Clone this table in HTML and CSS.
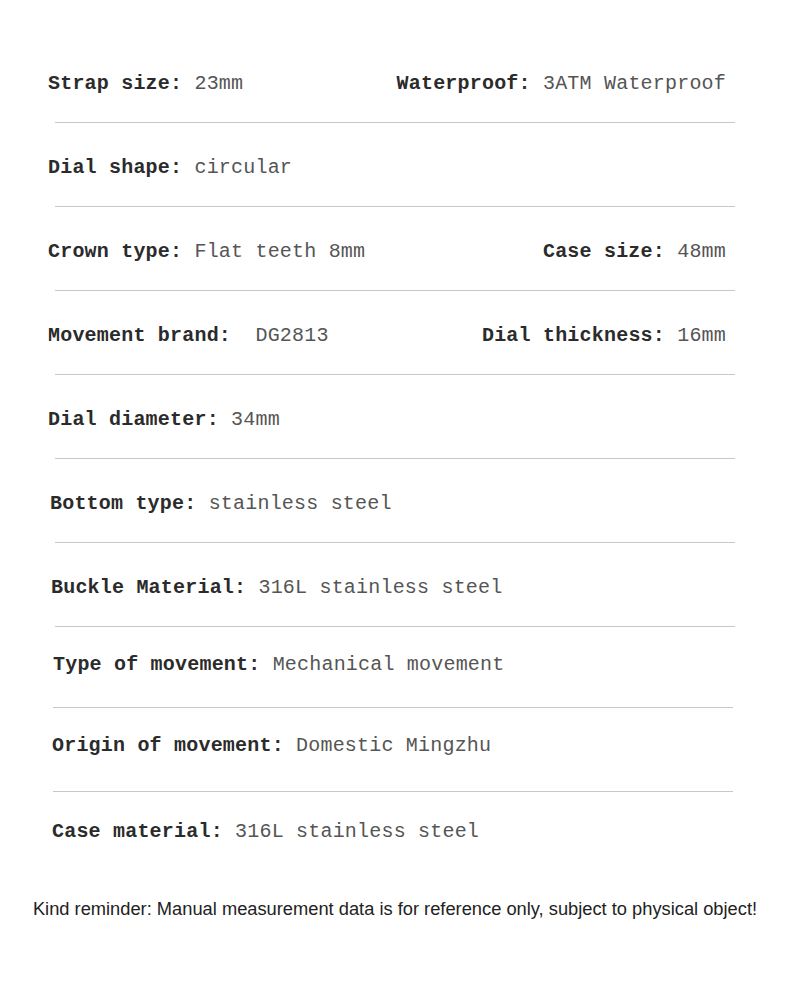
FILE: index.html
```html
<!DOCTYPE html>
<html>
<head>
<meta charset="utf-8">
<link rel="stylesheet" href="styles.css">
</head>
<body>
<div class="page">
  <div class="row"><span class="item"><b>Strap size:</b> 23mm</span><span class="item"><b>Waterproof:</b> 3ATM Waterproof</span></div>
  <div class="divider"></div>
  <div class="row"><span class="item"><b>Dial shape:</b> circular</span></div>
  <div class="divider"></div>
  <div class="row"><span class="item"><b>Crown type:</b> Flat teeth 8mm</span><span class="item"><b>Case size:</b> 48mm</span></div>
  <div class="divider"></div>
  <div class="row"><span class="item"><b>Movement brand:</b>  DG2813</span><span class="item"><b>Dial thickness:</b> 16mm</span></div>
  <div class="divider"></div>
  <div class="row"><span class="item"><b>Dial diameter:</b> 34mm</span></div>
  <div class="divider"></div>
  <div class="row in2"><span class="item"><b>Bottom type:</b> stainless steel</span></div>
  <div class="divider"></div>
  <div class="row in3"><span class="item"><b>Buckle Material:</b> 316L stainless steel</span></div>
  <div class="divider"></div>
  <div class="row in5 short"><span class="item"><b>Type of movement:</b> Mechanical movement</span></div>
  <div class="divider d2"></div>
  <div class="row in4 high"><span class="item"><b>Origin of movement:</b> Domestic Mingzhu</span></div>
  <div class="divider d2"></div>
  <div class="row in4 last"><span class="item"><b>Case material:</b> 316L stainless steel</span></div>
  <p class="reminder">Kind reminder: Manual measurement data is for reference only, subject to physical object!</p>
</div>
</body>
</html>
```
FILE: styles.css
```css
html, body {
  margin: 0;
  padding: 0;
  background: #fff;
}
.page {
  width: 790px;
  height: 982px;
  padding-top: 39px;
  box-sizing: border-box;
}
.row {
  display: flex;
  justify-content: space-between;
  align-items: center;
  height: 83px;
  padding: 5px 64px 0 48px;
  box-sizing: border-box;
}
.item {
  font-family: "Liberation Mono", "DejaVu Sans Mono", monospace;
  font-size: 20px;
  letter-spacing: 0.2px;
  color: #555;
  white-space: pre;
}
.item b {
  color: #2b2b2b;
  font-weight: bold;
}
.in2 { padding-left: 50px; }
.in3 { padding-left: 51px; }
.in4 { padding-left: 52px; }
.in5 { padding-left: 53px; }
.short {
  height: 80px;
  padding-top: 0;
  padding-bottom: 6px;
}
.high {
  padding-top: 0;
  padding-bottom: 9px;
}
.last {
  padding-top: 0;
  padding-bottom: 5px;
}
.divider {
  height: 1px;
  background: #c8c8c8;
  margin: 0 55px;
}
.divider.d2 { margin: 0 57px 0 53px; }
.reminder {
  margin: 23px 0 0;
  text-align: center;
  font-family: "Liberation Sans", Arial, sans-serif;
  font-size: 18.3px;
  color: #222;
}
```
